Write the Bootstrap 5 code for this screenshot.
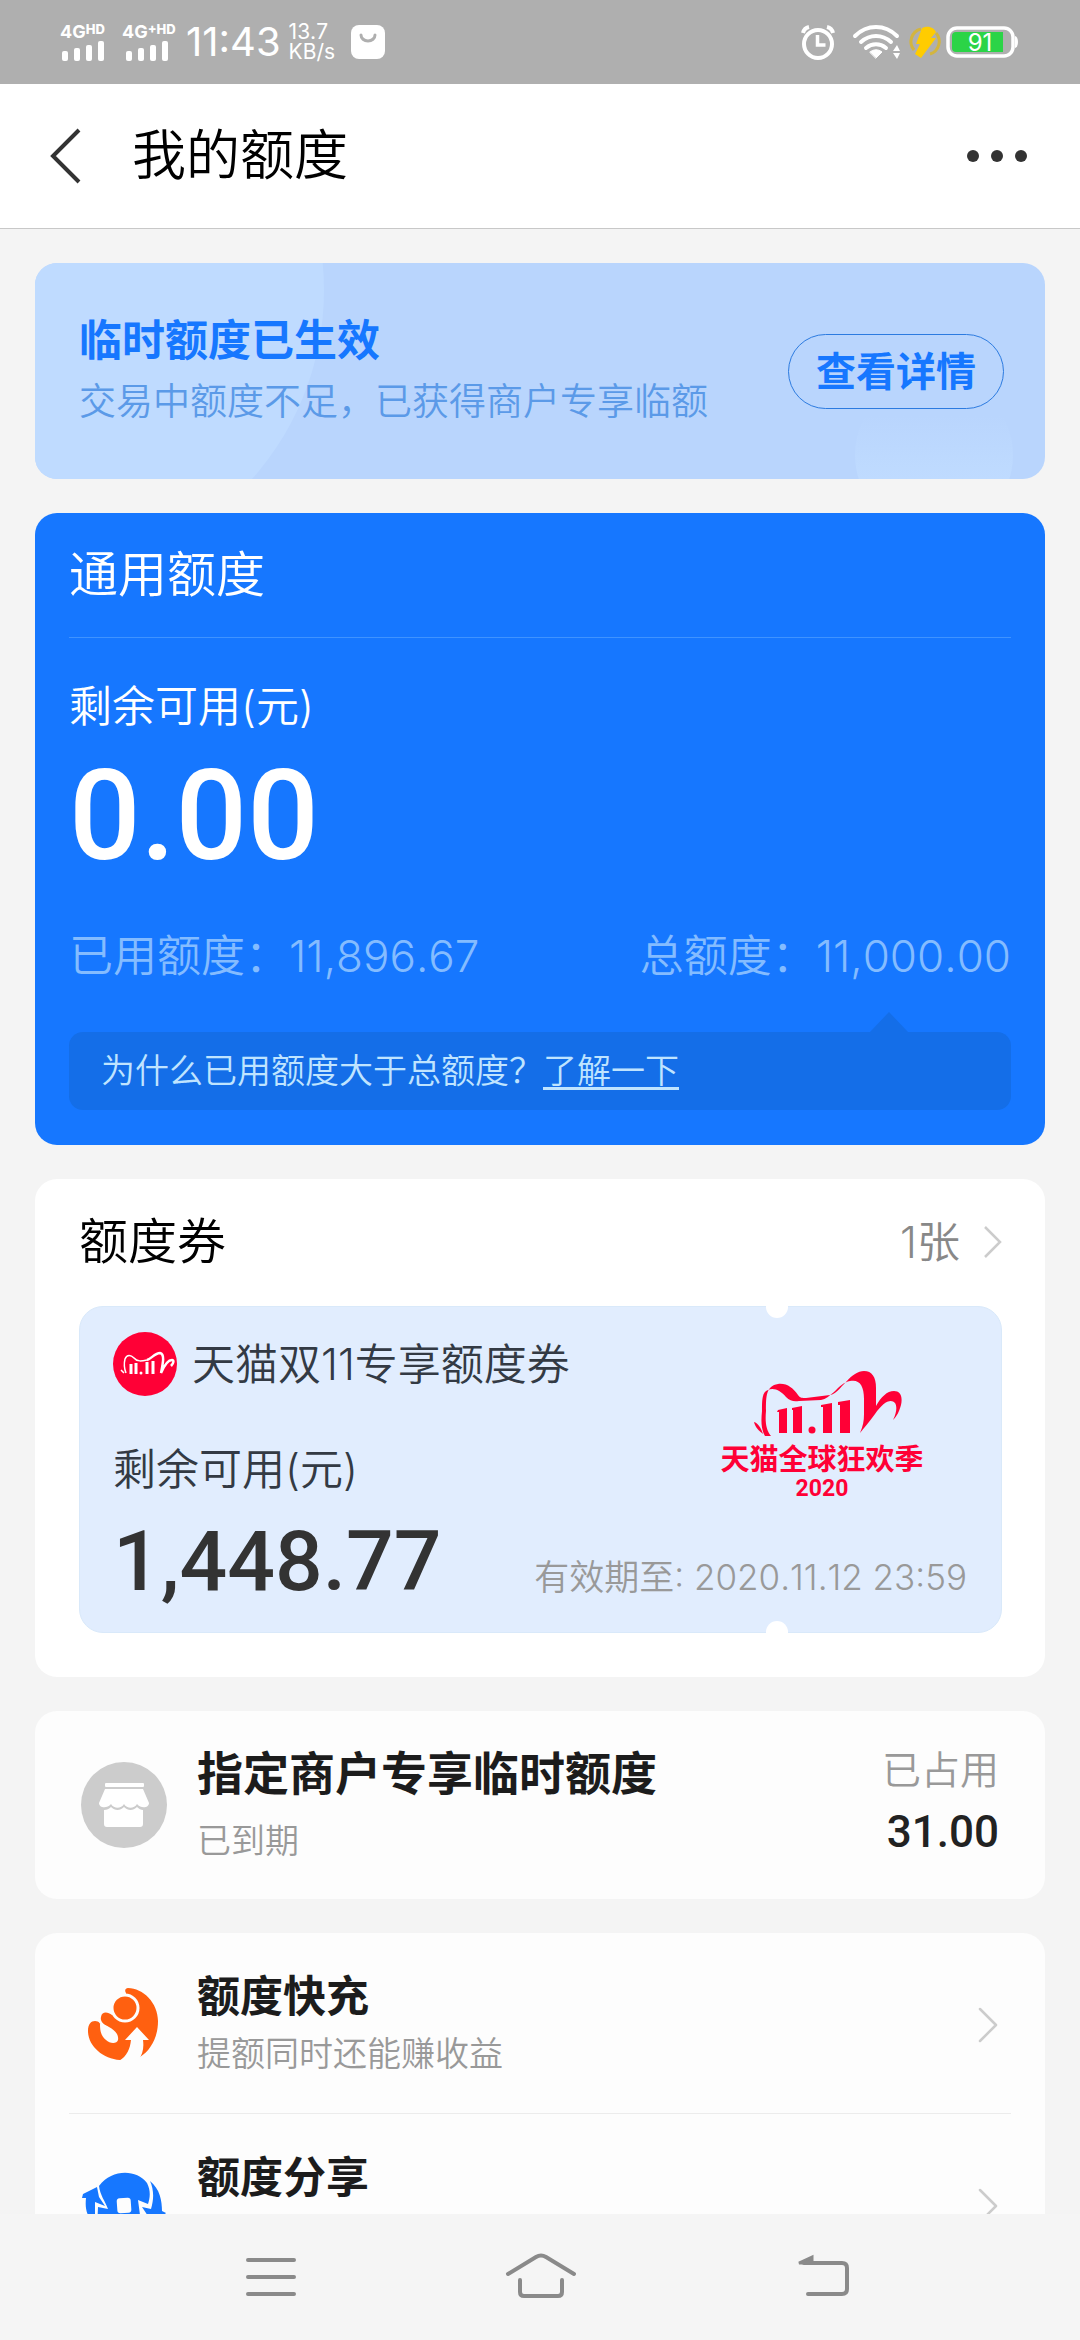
<!DOCTYPE html>
<html lang="zh-CN">
<head>
<meta charset="utf-8">
<meta name="viewport" content="width=device-width, initial-scale=1">
<title>我的额度</title>
<link rel="stylesheet" href="https://cdn.jsdelivr.net/npm/bootstrap@5.3.0/dist/css/bootstrap.min.css">
<style>
  body { font-family: Inter, "Noto Sans CJK SC", sans-serif; font-weight: 350; font-kerning: none; background: #f4f4f4; color: #000; }
  svg { display: block; flex: none; overflow: visible; }
  a { color: inherit; }
  .screen { height: 100vh; }
  .fs-s { font-size: 34px; line-height: 54px; }
  .fs-m { font-size: 43px; line-height: 60px; }
  .fs-l { font-size: 49px; line-height: 60px; font-weight: 350; }
  .num { font-family: Roboto, sans-serif; font-weight: 500; }
  .soft { color: #999; }

  .statusbar { height: 84px; background: #afafaf; color: #fff; padding: 0 60px; }
  .net { font-size: 18px; line-height: 18px; font-weight: 700; }
  .net small { font-size: 13px; line-height: 13px; vertical-align: top; font-weight: 800; }
  .clock { font-size: 40px; line-height: 48px; font-weight: 400; margin-left: 10px; }
  .speed { font-size: 21px; line-height: 20px; font-weight: 400; }

  .titlebar { height: 145px; background: #fff; border-bottom: 1px solid #c8c8c8; padding: 0 53px 0 50px; }
  .titlebar h1 { font-size: 54px; line-height: 70px; font-weight: 350; margin-left: 50px; }
  .titlebar button, .sysnav button { background: none; border: 0; padding: 0; }

  .content { min-height: 0; padding: 34px 35px 0; gap: 34px; }
  .panel { border-radius: 22px; flex: none; background: #fdfdfd; }

  .notice { background: #b9d5fd; color: #1677ff; padding: 46px 41px 46px 44px; overflow: hidden; position: relative; }
  .notice::before, .notice::after { content: ""; position: absolute; border-radius: 50%; }
  .notice::before { width: 568px; height: 568px; left: -279px; top: -257px; background: #bfdbff; }
  .notice::after { width: 158px; height: 158px; right: 32px; top: 113px; background: linear-gradient(#b9d5fd 25%, #bfdbff 65%); }
  .notice > * { position: relative; z-index: 1; }
  .notice h2 { font-size: 43px; line-height: 62px; font-weight: 700; }
  .notice p { font-size: 37px; line-height: 62px; color: #5b9ae8; }
  .notice button { font-size: 40px; line-height: 57px; font-weight: 700; color: #1677ff; border: 1px solid #2c7be0; padding: 8px 27px; }

  .quota { background: #1677ff; color: #fff; padding: 0 34px 35px; }
  .quota-head { padding: 32px 0; border-bottom: 1px solid #3f93ff; margin-bottom: 38px; }
  .quota-sum { font-size: 126px; line-height: 160px; }
  .quota-use { font-size: 44px; line-height: 60px; color: #84bcff; margin: 30px 0 46px; }
  .tip { background: #146ee8; color: #bfe4ff; border-radius: 14px; padding: 12px 32px; position: relative; }
  .tip::before { content: ""; position: absolute; right: 103px; bottom: 100%; border: 19px solid transparent; border-top: 0; border-bottom: 20px solid #146ee8; }
  .tip a { text-decoration-thickness: 3px; text-underline-offset: 4px; }

  .vouchers { background: #fff; padding: 33px 43px 44px 44px; }
  .vouchers-head { margin-bottom: 34px; }
  .vouchers-more { color: #888; }
  .voucher { background: #e1edfe; border: 1px solid #d9e9fa; border-radius: 24px; padding: 25px 34px 28px 33px; color: #333a44; position: relative; }
  .notch { position: absolute; right: 213px; width: 22px; height: 12px; background: #fff; }
  .notch-top { top: -1px; border-radius: 0 0 11px 11px; }
  .notch-bottom { bottom: -1px; border-radius: 11px 11px 0 0; }
  .voucher-name { gap: 15px; margin-bottom: 43px; }
  .voucher-logo { margin-right: 44px; }
  .voucher-sum { font-size: 84px; line-height: 84px; color: #333; }
  .voucher-date { font-size: 35px; line-height: 54px; }
  .voucher-foot { margin-top: 21px; }

  .merchant { padding: 28px 46px 24px; gap: 30px; }
  .merchant h2 { font-size: 46px; line-height: 68px; font-weight: 700; color: #1c1c1c; }
  .merchant p { font-size: 34px; line-height: 68px; }
  .used { font-size: 39px; line-height: 62px; }
  .used .num { font-size: 44px; color: #222; }

  .links { padding: 0 34px; }
  .entry { padding: 34px 12px 30px; gap: 32px; text-decoration: none; }
  .entry + .entry { border-top: 1px solid #ececec; }
  .entry strong { font-size: 43px; line-height: 58px; font-weight: 700; color: #1c1c1c; }
  .entry span span { font-size: 34px; line-height: 58px; }

  .sysnav { height: 126px; background: #f5f5f5; padding: 0 226px; }
</style>
</head>
<body>
<div class="screen d-flex flex-column overflow-hidden">

  <div class="statusbar d-flex align-items-center flex-shrink-0">
    <div class="net">4G<small>HD</small>
      <svg width="46" height="20" viewBox="0 0 46 20" fill="#fff"><rect x="2" y="10" width="6" height="10" rx="2"/><rect x="14" y="7" width="6" height="13" rx="2"/><rect x="26" y="4" width="6" height="16" rx="2"/><rect x="38" y="0" width="6" height="20" rx="2"/></svg>
    </div>
    <div class="net ms-3">4G<small>+HD</small>
      <svg width="54" height="20" viewBox="0 0 54 20" fill="#fff"><rect x="4" y="10" width="6" height="10" rx="2"/><rect x="16" y="7" width="6" height="13" rx="2"/><rect x="28" y="4" width="6" height="16" rx="2"/><rect x="40" y="0" width="6" height="20" rx="2"/></svg>
    </div>
    <div class="clock">11:43</div>
    <div class="speed ms-2">13.7<br>KB/s</div>
    <svg class="ms-3" width="34" height="34" viewBox="0 0 34 34"><rect width="34" height="34" rx="8" fill="#fff"/><path d="M10 10a7 6 0 0 0 14 0" fill="none" stroke="#afafaf" stroke-width="3" stroke-linecap="round"/></svg>
    <div class="d-flex align-items-center ms-auto">
      <svg width="36" height="36" viewBox="0 0 36 36" fill="none" stroke="#fff"><circle cx="18" cy="20" r="14" stroke-width="4"/><path d="M17.500 11v10h8" stroke-width="3.500"/><path d="M3 9a8 8 0 0 1 6-6M33 9a8 8 0 0 0-6-6" stroke-width="4"/></svg>
      <svg class="ms-3" width="48" height="36" viewBox="0 0 48 36" fill="none" stroke="#fff" stroke-width="4" stroke-linecap="round"><path d="M3 12c12-12 30-12 42 0M9 18c9-8 21-8 30 0M14 24c6-5 14-5 20 0"/><path d="M18 28c4-3 8-3 12 0l-6 6z" fill="#fff" stroke-width="1"/><path d="M41 27l4-6 3 6zM41 29l4 6 3-6z" fill="#fff" stroke="none"/></svg>
      <svg class="ms-2" width="34" height="34" viewBox="0 0 34 34"><path d="M13 4A13 13 0 0 0 6 25" fill="none" stroke="#d3b53f" stroke-width="3"/><path d="M28 8a13 13 0 0 1-6 21" fill="none" stroke="#d3b53f" stroke-width="3"/><path d="M14 3c7-3 12 0 14 4l-5 6h5L13 33l-6-4 5-10H8z" fill="#fc0"/></svg>
      <svg class="ms-1" width="74" height="32" viewBox="0 0 74 32"><rect x="2" y="2" width="65" height="28" rx="9" fill="#afafaf" stroke="#fff" stroke-width="3.500"/><path d="M10 6h47v20H10a4 4 0 0 1-4-4V10a4 4 0 0 1 4-4z" fill="#2bd447"/><path d="M69 10a3 6 0 0 1 0 12z" fill="#fff"/><text x="34" y="25" text-anchor="middle" font-family="Inter, sans-serif" font-size="24" font-weight="400" fill="#fff">91</text></svg>
    </div>
  </div>

  <header class="titlebar d-flex align-items-center flex-shrink-0">
    <button type="button" aria-label="返回"><svg width="32" height="54" viewBox="0 0 32 54" fill="none" stroke="#333" stroke-width="4"><path d="M29 1L3 27l26 26"/></svg></button>
    <h1 class="mb-0">我的额度</h1>
    <button class="ms-auto" type="button" aria-label="更多"><svg width="60" height="14" viewBox="0 0 60 14" fill="#333"><circle cx="6" cy="7" r="6"/><circle cx="30" cy="7" r="6"/><circle cx="54" cy="7" r="6"/></svg></button>
  </header>

  <main class="content d-flex flex-column flex-grow-1 overflow-hidden">

    <section class="panel notice d-flex align-items-center justify-content-between">
      <div>
        <h2 class="mb-0">临时额度已生效</h2>
        <p class="mb-0">交易中额度不足，已获得商户专享临额</p>
      </div>
      <button class="btn rounded-pill" type="button">查看详情</button>
    </section>

    <section class="panel quota">
      <h2 class="quota-head fs-l">通用额度</h2>
      <div class="fs-m">剩余可用(元)</div>
      <div class="quota-sum num">0.00</div>
      <div class="quota-use d-flex justify-content-between"><span>已用额度：11,896.67</span><span>总额度：11,000.00</span></div>
      <div class="tip fs-s">为什么已用额度大于总额度？<a href="#">了解一下</a></div>
    </section>

    <section class="panel vouchers">
      <div class="vouchers-head d-flex align-items-center justify-content-between">
        <h2 class="fs-l mb-0">额度券</h2>
        <a class="vouchers-more fs-m d-flex align-items-center gap-4 text-decoration-none" href="#">1张
          <svg width="18" height="32" viewBox="0 0 18 32" fill="none" stroke="#ccc" stroke-width="2.500"><path d="M1 1l15 15L1 31"/></svg></a>
      </div>
      <div class="voucher">
        <span class="notch notch-top"></span><span class="notch notch-bottom"></span>
        <div class="d-flex justify-content-between align-items-end">
          <div>
            <div class="voucher-name fs-m d-flex align-items-center">
              <svg width="64" height="64" viewBox="0 0 64 64"><circle cx="32" cy="32" r="32" fill="#ff0036"/><g fill="none" stroke="#fff"><path d="M8 38l3 3M13 41c-2-5-2-10-1-14 2-5 6-4 9-1 3 4 8 3 13 2" stroke-width="1.500"/><path d="M34 28c4-1 8-7 13-7 5 1 3 10 1 20 3-7 7-13 11-13 2 0 2 3-1 6" stroke-width="2.500"/><path d="M18 32v10M23 31v11M34 30v12M40 29v13" stroke-width="3"/></g><circle cx="28" cy="41" r="1.500" fill="#fff"/></svg>
              <span>天猫双11专享额度券</span>
            </div>
            <div class="fs-m">剩余可用(元)</div>
          </div>
          <svg class="voucher-logo" width="202" height="130" viewBox="0 0 202 130" fill="#ff0036">
            <path d="M33 53c4 1 7 6 9 12-4-3-8-7-9-12z"/>
            <path d="M50 67c-5-6-6-14-5-25 0-15 0-25 12-27 9-1 15 4 20 11 2 3 4 3 8 3l24-3c6-1 9-6 16-13 6-7 12-11 18-11 8 0 12 6 12 17v18c5-9 11-15 18-15 6 0 9 5 7 14-2 7-4 11-8 15 4-8 4-14 2-17-4-5-12-1-20 11-6 8-11 14-15 19 3-7 4-12 4-19V30c0-14-5-20-14-18-6 1-11 6-16 11-5 4-8 7-13 8l-22 1c-5 1-9 0-13-4-5-6-12-10-18-7-6 2-6 10-6 21-1 10-1 18 3 25z"/>
            <path d="M57 41l9-2v25h-8V43h-2zM71 39l10-2v27h-9V41h-1zM100 36l11-2v30h-9V38h-2zM117 33l12-2v33h-10V36h-2z"/><circle cx="91" cy="61" r="3.500"/>
            <text x="101" y="101" text-anchor="middle" font-family="Noto Sans CJK SC, sans-serif" font-size="29" font-weight="700">天猫全球狂欢季</text>
            <text x="101" y="127" text-anchor="middle" font-family="Roboto, sans-serif" font-size="23" font-weight="700">2020</text>
          </svg>
        </div>
        <div class="voucher-foot d-flex justify-content-between align-items-end">
          <div class="voucher-sum num">1,448.77</div>
          <div class="voucher-date soft">有效期至: 2020.11.12 23:59</div>
        </div>
      </div>
    </section>

    <section class="panel merchant d-flex align-items-center">
      <svg width="86" height="86" viewBox="0 0 86 86"><circle cx="43" cy="41" r="43" fill="#ccc"/><g fill="#fff" transform="translate(0 -2)"><rect x="24" y="21" width="39" height="4" rx="1"/><path d="M24 27h38l6 14c0 5-8 6-12 1-3 5-10 5-13 0-3 5-10 5-13 0-4 5-12 4-12-1z"/><path d="M23 48c3 0 5-1 7-3 4 4 9 4 13 0 4 4 9 4 13 0 2 2 4 3 6 3v14q0 3-3 3H26q-3 0-3-3z"/></g></svg>
      <div>
        <h2 class="mb-0">指定商户专享临时额度</h2>
        <p class="mb-0 soft">已到期</p>
      </div>
      <div class="used ms-auto text-end align-self-start"><div class="soft">已占用</div><div class="num">31.00</div></div>
    </section>

    <nav class="panel links rounded-bottom-0">
      <a class="entry d-flex align-items-center" href="#">
        <svg width="84" height="84" viewBox="0 0 84 84"><path d="M47 5C62 5 77 20 77 38c0 16-7 29-18 36l-20 3C22 76 7 63 7 48c0-7 3-10 7-10s6 3 6 6l7 0c-5-3-8-6-7-10 1-6 7-5 11-2l13-7 1-15c-2-3 0-5 2-5z" fill="#ff6010"/><path d="M19 41c3 0 6 1 9 3 6 3 10 8 9 13-1 4-8 4-12 0-5-4-6-9-6-16z" fill="#fdfdfd"/><circle cx="44" cy="25" r="13" fill="#ff6010" stroke="#fdfdfd" stroke-width="3"/><path d="M56 44l12 13h-6c1 8 0 14-5 21H38c8-5 11-12 12-21h-6z" fill="#fdfdfd"/></svg>
        <span class="d-flex flex-column"><strong>额度快充</strong><span class="soft">提额同时还能赚收益</span></span>
        <svg class="ms-auto" width="21" height="36" viewBox="0 0 21 36" fill="none" stroke="#ccc" stroke-width="2.500" stroke-linecap="round" stroke-linejoin="round"><path d="M2 2l16 16L2 34"/></svg>
      </a>
      <a class="entry d-flex align-items-center" href="#">
        <svg width="84" height="84" viewBox="0 0 84 84"><g fill="#1677ff"><path d="M18 22C31 5 55 5 66 19c4 8 3 15 1 21l-10-4 4 30H16l1-23 10 2c-3-8-8-14-9-23z"/><path d="M2 30l14-7 2 10 6 9-10-4v22C5 52 4 44 5 34l-4 0zM69 17c10 8 12 20 12 30l4 2-12 12-12-18 9 2c3-10 3-19-1-28z"/></g><rect x="36" y="34" width="14" height="15" rx="3" fill="#fdfdfd" transform="rotate(-4 43 41)"/></svg>
        <span class="d-flex flex-column"><strong>额度分享</strong><span>&nbsp;</span></span>
        <svg class="ms-auto" width="21" height="36" viewBox="0 0 21 36" fill="none" stroke="#ccc" stroke-width="2.500" stroke-linecap="round" stroke-linejoin="round"><path d="M2 2l16 16L2 34"/></svg>
      </a>
    </nav>
  </main>

  <footer class="sysnav d-flex align-items-center justify-content-between flex-shrink-0">
    <button type="button" aria-label="菜单"><svg width="90" height="48" viewBox="0 0 90 48" stroke="#8a8a8a" stroke-width="4" stroke-linecap="round"><path d="M22 7h46M22 24h46M22 41h46"/></svg></button>
    <button type="button" aria-label="主页"><svg width="90" height="48" viewBox="0 0 90 48" fill="none" stroke="#8a8a8a" stroke-width="4" stroke-linecap="round"><path d="M13 21L41 4q5-3 10 0l28 17M25 27v12q0 4 4 4h34q4 0 4-4V27"/></svg></button>
    <button type="button" aria-label="后退"><svg width="90" height="48" viewBox="0 0 90 48" fill="none" stroke="#8a8a8a" stroke-width="4" stroke-linecap="round"><path d="M40 10h38q5 0 5 5v21q0 5-5 5H44"/><path d="M35 10l13-6v6z" fill="#8a8a8a" stroke-width="3"/></svg></button>
  </footer>
</div>
<script src="https://cdn.jsdelivr.net/npm/bootstrap@5.3.0/dist/js/bootstrap.bundle.min.js"></script>
</body>
</html>
